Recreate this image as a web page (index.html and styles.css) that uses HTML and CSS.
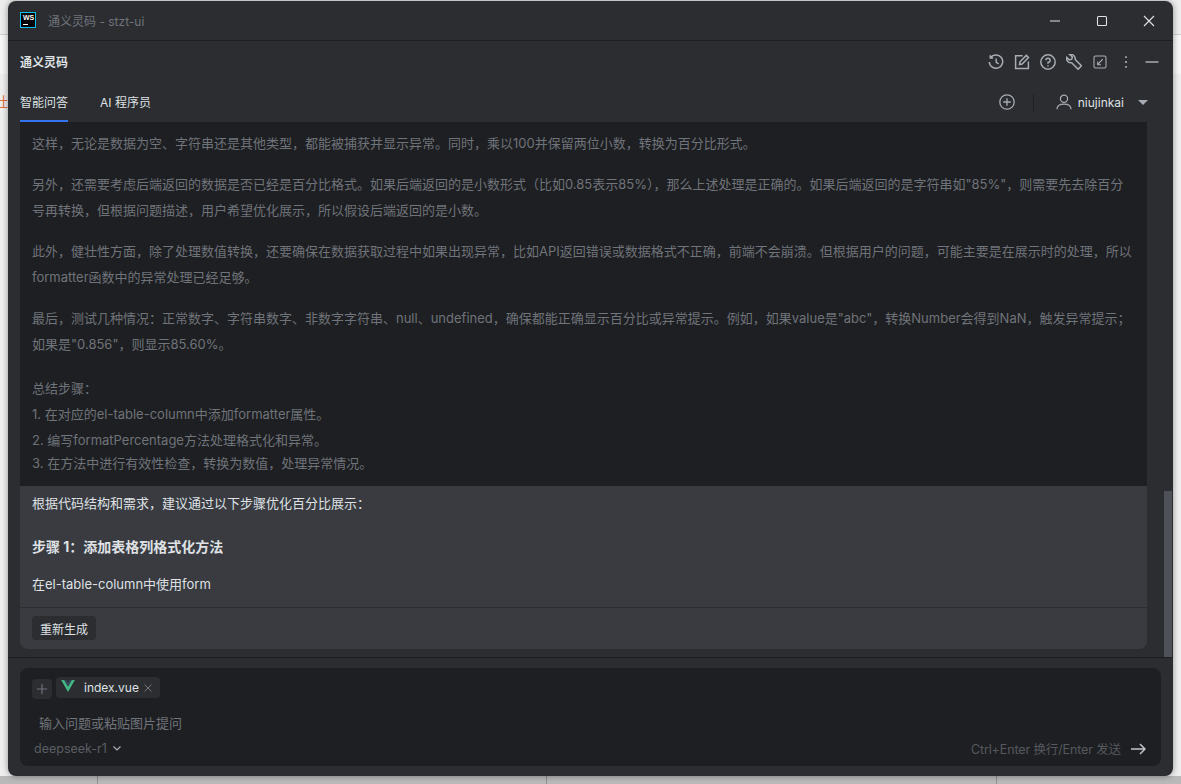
FILE: index.html
```html
<!DOCTYPE html>
<html lang="zh">
<head>
<meta charset="utf-8">
<title>通义灵码 - stzt-ui</title>
<link rel="stylesheet" href="styles.css">
</head>
<body>
<span class="peek-left">社</span>
<div class="window">
  <header class="titlebar">
    <div class="ws-logo"><span class="ws-text">WS</span><span class="ws-bar"></span></div>
    <span class="win-title">通义灵码 - stzt-ui</span>
    <div class="win-controls">
      <svg class="ctl" viewBox="0 0 12 12"><path d="M1 6h10" /></svg>
      <svg class="ctl" viewBox="0 0 12 12"><rect x="1.5" y="1.5" width="9" height="9" rx="1"/></svg>
      <svg class="ctl" viewBox="0 0 12 12"><path d="M1 1l10 10M11 1L1 11"/></svg>
    </div>
  </header>
  <div class="panel-head">
    <span class="panel-title">通义灵码</span>
    <div class="tools">
      <svg class="tool" viewBox="0 0 16 16"><path d="M2.600 3.600A6.700 6.700 0 1 1 1.300 8M2.300 1.200v2.900h2.900M8.200 4.600v3.800l2.500 1.500"/></svg>
      <svg class="tool" viewBox="0 0 16 16"><path d="M8.600 1.700H1.600v12.800h12.800V7.400M6 7.800l-.5 2.700 2.700-.5 6.300-6.400-2.200-2.200z"/></svg>
      <svg class="tool" viewBox="0 0 16 16"><circle cx="8" cy="8" r="7.200"/><path d="M5.900 6.200A2.100 2.100 0 1 1 8 8.400v1.300M8 11.200v1.200"/></svg>
      <svg class="tool" viewBox="0 0 16 16"><path d="M.6 3.400l2.900 2.500 2.200-.7.700-2.200L3.600.4A4.600 4.600 0 0 1 9.200 5.500l6.200 6.300-3.300 3.500-6.400-6.500A4.600 4.600 0 0 1 .6 3.400z"/></svg>
      <svg class="tool tool-thin" viewBox="0 0 16 16"><rect x="2" y="2" width="12" height="12" rx="1.500"/><path d="M10.700 5.200L5.700 10.700M5.700 7.400V10.700H9"/></svg>
      <svg class="tool tool-thin" viewBox="0 0 16 16"><path class="dots" d="M8 2.200v1.800M8 7.100v1.800M8 12v1.800"/></svg>
      <svg class="tool tool-thin" viewBox="0 0 16 16"><path d="M1.500 8h13"/></svg>
    </div>
  </div>
  <div class="tabbar">
    <span class="tab tab-active">智能问答</span>
    <span class="tab tab-next">AI 程序员</span>
    <div class="tab-right">
      <svg class="plus-circle" viewBox="0 0 16 16"><circle cx="8" cy="8" r="7.200"/><path d="M8 4.200v7.600M4.200 8h7.600"/></svg>
      <span class="tab-sep"></span>
      <svg class="user" viewBox="0 0 16 16"><circle cx="8" cy="4.800" r="3.600"/><path d="M1 15.200c0-3.600 3-5 7-5s7 1.400 7 5"/></svg>
      <span class="user-name">niujinkai</span>
      <span class="caret"></span>
    </div>
  </div>
  <div class="main">
    <div class="chat">
      <div class="thinking">
        <p class="t1">这样，无论是数据为空、字符串还是其他类型，都能被捕获并显示异常。同时，乘以100并保留两位小数，转换为百分比形式。</p>
        <p class="t2">另外，还需要考虑后端返回的数据是否已经是百分比格式。如果后端返回的是小数形式（比如0.85表示85%），那么上述处理是正确的。如果后端返回的是字符串如"85%"，则需要先去除百分号再转换，但根据问题描述，用户希望优化展示，所以假设后端返回的是小数。</p>
        <p class="t2">此外，健壮性方面，除了处理数值转换，还要确保在数据获取过程中如果出现异常，比如API返回错误或数据格式不正确，前端不会崩溃。但根据用户的问题，可能主要是在展示时的处理，所以formatter函数中的异常处理已经足够。</p>
        <p class="t2">最后，测试几种情况：正常数字、字符串数字、非数字字符串、null、undefined，确保都能正确显示百分比或异常提示。例如，如果value是"abc"，转换Number会得到NaN，触发异常提示；如果是"0.856"，则显示85.60%。</p>
        <ol class="steps">
          <li class="steps-head">总结步骤：</li>
          <li>1. 在对应的el-table-column中添加formatter属性。</li>
          <li>2. 编写formatPercentage方法处理格式化和异常。</li>
          <li class="step-last">3. 在方法中进行有效性检查，转换为数值，处理异常情况。</li>
        </ol>
      </div>
      <div class="answer">
        <p class="a1">根据代码结构和需求，建议通过以下步骤优化百分比展示：</p>
        <p class="a2">步骤 1：添加表格列格式化方法</p>
        <p class="a3">在el-table-column中使用form</p>
      </div>
      <div class="actions"><button class="regen">重新生成</button></div>
    </div>
    <div class="scroll"><div class="thumb"></div></div>
  </div>
  <div class="composer-wrap">
    <div class="composer">
      <div class="chips">
        <span class="add-btn"><svg viewBox="0 0 14 14"><path d="M7 1v12M1 7h12"/></svg></span>
        <span class="file-chip">
          <svg class="vue" viewBox="0 0 16 14"><path class="vue-g" d="M0 0h3.600L8 7.600 12.400 0H16L8 14z"/><path class="vue-d" d="M3.600 0h2.600L8 3.200 9.800 0h2.600L8 7.600z"/></svg>
          <span class="file-name">index.vue</span>
          <svg class="x" viewBox="0 0 8 8"><path d="M.5.5l7 7M7.500.5l-7 7"/></svg>
        </span>
      </div>
      <div class="placeholder">输入问题或粘贴图片提问</div>
      <div class="composer-foot">
        <span class="model">deepseek-r1</span>
        <svg class="chev" viewBox="0 0 8 5"><path d="M.5.5L4 4 7.500.5"/></svg>
        <span class="hint">Ctrl+Enter 换行/Enter 发送</span>
        <svg class="send" viewBox="0 0 15 12"><path d="M0 6h14M9 1l5 5-5 5"/></svg>
      </div>
    </div>
  </div>
</div>
</body>
</html>
```
FILE: styles.css
```css
* { box-sizing: border-box; }
html, body { margin: 0; height: 100%; }
body {
  background:
    linear-gradient(#8f8f8f, #8f8f8f) 97px 776px / 1px 8px no-repeat,
    linear-gradient(#8f8f8f, #8f8f8f) 546px 776px / 1px 8px no-repeat,
    linear-gradient(#8f8f8f, #8f8f8f) 996px 776px / 1px 8px no-repeat,
    linear-gradient(to bottom, #ededed 0, #ededed 34px, #cfcfcf 34px, #cfcfcf 35px, #f6f6f6 35px, #f6f6f6 74px, #eeeeee 74px, #eeeeee 776px, #b9b9b9 776px);
  font-family: Inter, "Noto Sans CJK SC", sans-serif;
  overflow: hidden;
  position: relative;
}
p { margin: 0; }
.peek-left {
  position: absolute;
  left: -6px;
  top: 91px;
  font-size: 14px;
  color: #e2703a;
}
.window {
  position: relative;
  margin-left: 8px;
  margin-top: 1px;
  width: 1165px;
  height: 775px;
  background: #2b2d30;
  border-radius: 8px;
  box-shadow: 0 0 6px rgba(0,0,0,.4);
  display: flex;
  flex-direction: column;
  overflow: hidden;
}
.titlebar {
  height: 40px;
  flex: none;
  border-bottom: 1px solid #1e1f22;
  display: flex;
  align-items: center;
  padding-left: 12px;
}
.ws-logo {
  width: 16px;
  height: 16px;
  background: #000;
  border: 1px solid #07c3f2;
  display: flex;
  flex-direction: column;
  padding: 1px 0 0 2px;
  margin-right: 12px;
  margin-top: -2px;
}
.ws-text { color: #fff; font: bold 7px/7px "Liberation Sans", sans-serif; }
.ws-bar { width: 5px; height: 1px; background: #fff; margin-top: 3px; }
.win-title { color: #6f737a; font-size: 12px; margin-top: -1px; }
.win-controls {
  margin-left: auto;
  display: flex;
  gap: 35px;
  padding-right: 18px;
  align-items: center;
}
.ctl { width: 12px; height: 12px; fill: none; stroke: #dfe1e5; stroke-width: 1.1; }
.panel-head {
  height: 41px;
  flex: none;
  display: flex;
  align-items: center;
  padding: 0 13px 0 12px;
}
.panel-title { color: #dfe1e5; font-size: 12px; font-weight: 700; }
.tools { margin-left: auto; display: flex; align-items: center; gap: 10px; }
.tool { width: 16px; height: 16px; fill: none; stroke: #a8adb5; stroke-width: 1.5; }
.tool-thin { stroke-width: 1.1; }
.tool-thin:last-child { stroke-width: 1.3; }
.dots { stroke-width: 1.7; }
.tabbar {
  height: 40px;
  flex: none;
  display: flex;
  align-items: stretch;
  padding: 0 25px 0 12px;
}
.tab {
  color: #dfe1e5;
  font-size: 12px;
  line-height: 41px;
  height: 40px;
}
.tab-active { border-bottom: 2px solid #3574f0; }
.tab-next { margin-left: 32px; }
.tab-right { margin-left: auto; display: flex; align-items: center; }
.plus-circle { width: 16px; height: 16px; fill: none; stroke: #a8adb5; stroke-width: 1.3; }
.tab-sep { width: 1px; height: 17px; background: #1e1f22; margin: 0 22px 0 18px; }
.user { width: 16px; height: 16px; fill: none; stroke: #a8adb5; stroke-width: 1.2; }
.user-name { color: #dfe1e5; font-size: 12px; margin-left: 6px; }
.caret {
  width: 0; height: 0;
  margin-left: 14px;
  border-left: 5px solid transparent;
  border-right: 5px solid transparent;
  border-top: 5px solid #a8adb5;
}
.main {
  height: 536px;
  flex: none;
  display: flex;
  padding-left: 12px;
  border-bottom: 1px solid #1e1f22;
}
.chat {
  width: 1127px;
  height: 527px;
  display: flex;
  flex-direction: column;
  border-radius: 0 0 8px 8px;
  overflow: hidden;
}
.thinking {
  height: 364px;
  flex: none;
  background: #1e1f22;
  color: #6f737a;
  font-size: 13px;
  line-height: 26px;
  padding: 8px 12px 0;
  overflow: hidden;
}
.t2 { margin-top: 15px; }
.steps { list-style: none; margin: 18px 0 0; padding: 0; }
.steps li { line-height: 26px; }
.steps .step-last { line-height: 21px; }
.answer {
  height: 122px;
  flex: none;
  background: #393b40;
  color: #dfe1e5;
  font-size: 13px;
  padding: 5px 12px 0;
  border-bottom: 1px solid #2b2d30;
}
.a1 { line-height: 24px; }
.a2 { line-height: 24px; margin-top: 20px; font-size: 14px; font-weight: 700; }
.a3 { line-height: 24px; margin-top: 13px; }
.actions {
  flex: 1;
  background: #393b40;
  padding: 8px 12px 0;
}
.regen {
  display: block;
  height: 24px;
  width: 64px;
  padding: 0;
  border: 0;
  border-radius: 4px;
  background: #2b2d30;
  color: #dfe1e5;
  font: 12px Inter, "Noto Sans CJK SC", sans-serif;
}
.scroll { flex: 1; position: relative; }
.thumb {
  position: absolute;
  top: 369px;
  bottom: 0;
  right: 1px;
  width: 8px;
  background: #4e5157;
}
.composer-wrap { flex: 1; padding: 10px 12px; }
.composer {
  height: 98px;
  background: #1e1f22;
  border-radius: 8px;
  padding: 9px 15px 0 12px;
  display: flex;
  flex-direction: column;
}
.chips { display: flex; align-items: center; height: 21px; gap: 4px; }
.add-btn {
  width: 20px; height: 20px;
  background: #2b2d30;
  border-radius: 4px;
  display: flex; align-items: center; justify-content: center;
  margin-top: 2px;
}
.add-btn svg { width: 12px; height: 12px; fill: none; stroke: #6f737a; stroke-width: 1.3; }
.file-chip {
  height: 21px;
  width: 104px;
  background: #2b2d30;
  border-radius: 4px;
  display: flex;
  align-items: center;
  padding-left: 5px;
}
.vue { width: 14px; height: 12px; margin-top: -3px; }
.vue-g { fill: #41b883; }
.vue-d { fill: #35495e; }
.file-name { color: #dfe1e5; font-size: 12px; margin-left: 9px; }
.x { width: 8px; height: 8px; margin-left: 5px; fill: none; stroke: #6f737a; stroke-width: 1; }
.placeholder { color: #6f737a; font-size: 13px; margin-left: 7px; margin-top: 15px; line-height: 20px; }
.composer-foot { display: flex; align-items: center; margin-top: 6px; margin-left: 2px; }
.model { color: #5a5d63; font-size: 12.5px; }
.chev { width: 8px; height: 5px; margin-left: 6px; fill: none; stroke: #a8adb5; stroke-width: 1.2; }
.hint { margin-left: auto; color: #55585e; font-size: 12.5px; letter-spacing: -0.12px; }
.send { width: 15px; height: 12px; margin-left: 10px; fill: none; stroke: #c0c3c9; stroke-width: 1.5; }
```
